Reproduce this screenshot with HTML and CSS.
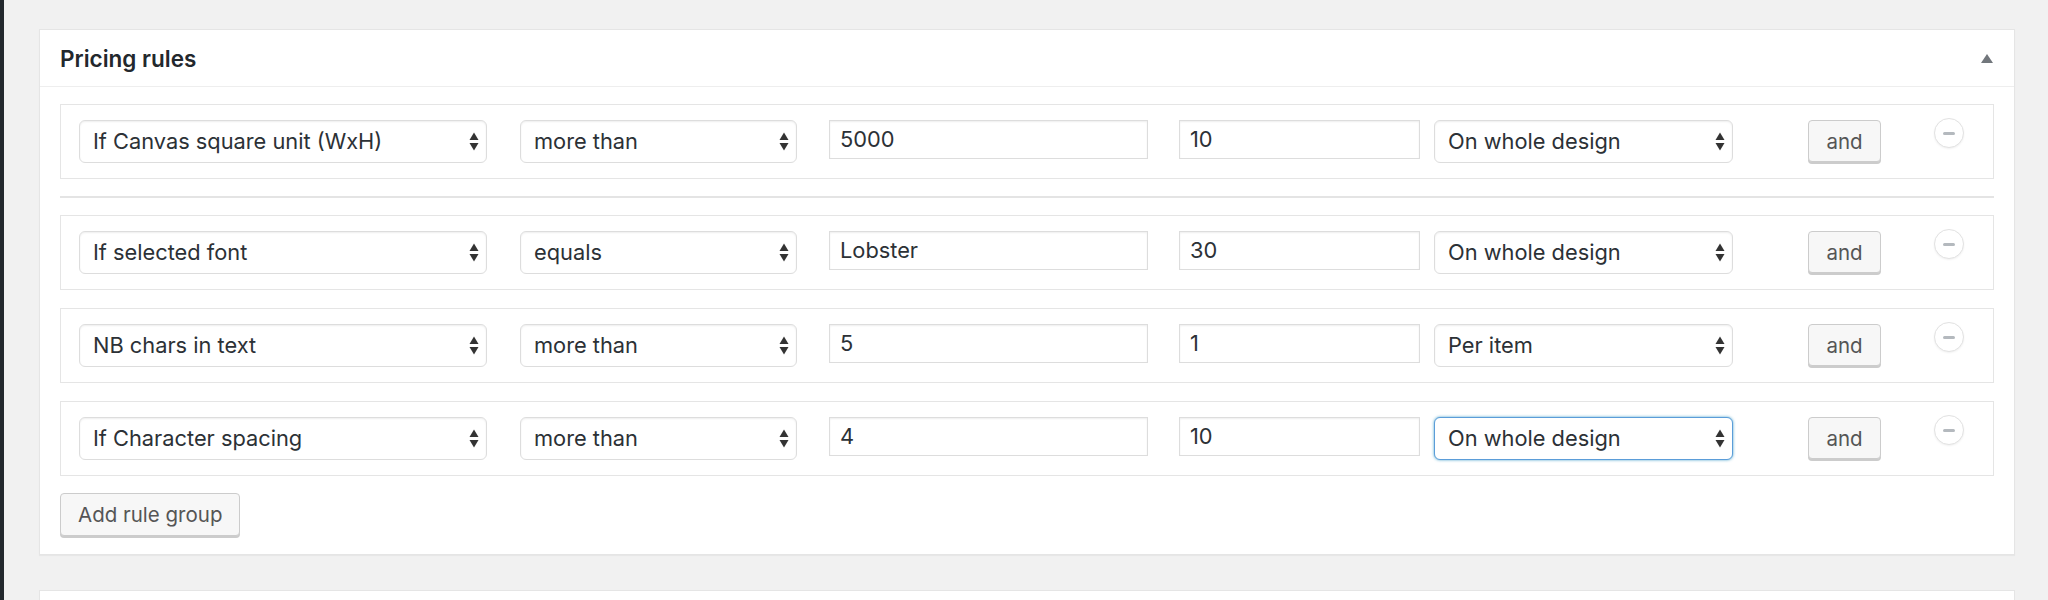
FILE: index.html
```html
<!DOCTYPE html>
<html>
<head>
    <link rel="stylesheet" href="styles.css">
</head>
<body>
    <div class="admin-menu"></div>
    <div class="wrap">
        <!-- Pricing rules box -->
        <div class="postbox">
            <div class="postbox-head">
                <h2>Pricing rules</h2>
                <svg class="toggle" width="12" height="9" viewBox="0 0 12 9"><polygon points="0,9 6,0 12,9" fill="#72777c"/></svg>
            </div>
            <div class="inside">
                <div class="rule-group">
                    <div class="select-wrap w-field">
                        <select><option>If Canvas square unit (WxH)</option></select>
                        <svg class="arrows" width="10" height="19" viewBox="0 0 10 19"><polygon points="0.5,8 5,0.5 9.5,8"/><polygon points="0.5,11 5,18.5 9.5,11"/></svg>
                    </div>
                    <div class="select-wrap w-op">
                        <select><option>more than</option></select>
                        <svg class="arrows" width="10" height="19" viewBox="0 0 10 19"><polygon points="0.5,8 5,0.5 9.5,8"/><polygon points="0.5,11 5,18.5 9.5,11"/></svg>
                    </div>
                    <input class="text-input w-value" type="text" value="5000">
                    <input class="text-input w-price" type="text" value="10">
                    <div class="select-wrap w-scope">
                        <select><option>On whole design</option></select>
                        <svg class="arrows" width="10" height="19" viewBox="0 0 10 19"><polygon points="0.5,8 5,0.5 9.5,8"/><polygon points="0.5,11 5,18.5 9.5,11"/></svg>
                    </div>
                    <button class="btn and-btn">and</button>
                    <span class="remove"><span></span></span>
                </div>

                <hr class="group-sep">

                <div class="rule-group">
                    <div class="select-wrap w-field">
                        <select><option>If selected font</option></select>
                        <svg class="arrows" width="10" height="19" viewBox="0 0 10 19"><polygon points="0.5,8 5,0.5 9.5,8"/><polygon points="0.5,11 5,18.5 9.5,11"/></svg>
                    </div>
                    <div class="select-wrap w-op">
                        <select><option>equals</option></select>
                        <svg class="arrows" width="10" height="19" viewBox="0 0 10 19"><polygon points="0.5,8 5,0.5 9.5,8"/><polygon points="0.5,11 5,18.5 9.5,11"/></svg>
                    </div>
                    <input class="text-input w-value" type="text" value="Lobster">
                    <input class="text-input w-price" type="text" value="30">
                    <div class="select-wrap w-scope">
                        <select><option>On whole design</option></select>
                        <svg class="arrows" width="10" height="19" viewBox="0 0 10 19"><polygon points="0.5,8 5,0.5 9.5,8"/><polygon points="0.5,11 5,18.5 9.5,11"/></svg>
                    </div>
                    <button class="btn and-btn">and</button>
                    <span class="remove"><span></span></span>
                </div>

                <div class="rule-group">
                    <div class="select-wrap w-field">
                        <select><option>NB chars in text</option></select>
                        <svg class="arrows" width="10" height="19" viewBox="0 0 10 19"><polygon points="0.5,8 5,0.5 9.5,8"/><polygon points="0.5,11 5,18.5 9.5,11"/></svg>
                    </div>
                    <div class="select-wrap w-op">
                        <select><option>more than</option></select>
                        <svg class="arrows" width="10" height="19" viewBox="0 0 10 19"><polygon points="0.5,8 5,0.5 9.5,8"/><polygon points="0.5,11 5,18.5 9.5,11"/></svg>
                    </div>
                    <input class="text-input w-value" type="text" value="5">
                    <input class="text-input w-price" type="text" value="1">
                    <div class="select-wrap w-scope">
                        <select><option>Per item</option></select>
                        <svg class="arrows" width="10" height="19" viewBox="0 0 10 19"><polygon points="0.5,8 5,0.5 9.5,8"/><polygon points="0.5,11 5,18.5 9.5,11"/></svg>
                    </div>
                    <button class="btn and-btn">and</button>
                    <span class="remove"><span></span></span>
                </div>

                <div class="rule-group">
                    <div class="select-wrap w-field">
                        <select><option>If Character spacing</option></select>
                        <svg class="arrows" width="10" height="19" viewBox="0 0 10 19"><polygon points="0.5,8 5,0.5 9.5,8"/><polygon points="0.5,11 5,18.5 9.5,11"/></svg>
                    </div>
                    <div class="select-wrap w-op">
                        <select><option>more than</option></select>
                        <svg class="arrows" width="10" height="19" viewBox="0 0 10 19"><polygon points="0.5,8 5,0.5 9.5,8"/><polygon points="0.5,11 5,18.5 9.5,11"/></svg>
                    </div>
                    <input class="text-input w-value" type="text" value="4">
                    <input class="text-input w-price" type="text" value="10">
                    <div class="select-wrap w-scope">
                        <select class="is-focus"><option>On whole design</option></select>
                        <svg class="arrows" width="10" height="19" viewBox="0 0 10 19"><polygon points="0.5,8 5,0.5 9.5,8"/><polygon points="0.5,11 5,18.5 9.5,11"/></svg>
                    </div>
                    <button class="btn and-btn">and</button>
                    <span class="remove"><span></span></span>
                </div>

                <button class="btn add-group">Add rule group</button>
            </div>
        </div>

        <div class="postbox next-box"></div>
    </div>
</body>
</html>
```

FILE: styles.css
```css
body {
    margin: 0;
    display: flex;
    height: 600px;
    overflow: hidden;
    background: #f1f1f1;
    font-family: Inter, "Noto Sans", sans-serif;
    color: #32373c;
}

.admin-menu {
    width: 4px;
    background: #23282d;
}

.wrap {
    flex: 1;
    padding: 29px 33px 0 35px;
}

.postbox {
    background: #fff;
    border: 1px solid #e5e5e5;
    box-shadow: 0 1px 1px rgba(0, 0, 0, .04);
    margin-bottom: 35px;
}

.postbox-head {
    height: 56px;
    border-bottom: 1px solid #eee;
    display: flex;
    align-items: center;
    justify-content: space-between;
    padding: 0 21px 0 20px;
}

.postbox-head h2 {
    margin: 0;
    font-size: 22.5px;
    font-weight: 600;
    color: #23282d;
}

.inside {
    padding: 17px 20px 18px;
    display: flex;
    flex-direction: column;
    align-items: flex-start;
}

.rule-group {
    box-sizing: border-box;
    width: 100%;
    height: 75px;
    border: 1px solid #e5e5e5;
    padding: 15px 18px;
    display: flex;
    align-items: flex-start;
    margin-bottom: 18px;
}

.rule-group:nth-last-of-type(1) {
    margin-bottom: 17px;
}

.group-sep {
    width: 100%;
    height: 2px;
    border: 0;
    background: #e4e4e4;
    margin: -1px 0 17px;
}

.select-wrap {
    position: relative;
    height: 43px;
}

.select-wrap select {
    appearance: none;
    -webkit-appearance: none;
    box-sizing: border-box;
    width: 100%;
    height: 43px;
    margin: 0;
    padding: 0 30px 1px 13px;
    border: 1px solid #ddd;
    border-radius: 6px;
    background: #fff;
    box-shadow: inset 0 1px 2px rgba(0, 0, 0, .07);
    font-family: Inter, "Noto Sans", sans-serif;
    font-size: 21.8px;
    color: #2c3136;
    outline: none;
}

.select-wrap select.is-focus {
    border-color: #5b9dd9;
    box-shadow: 0 0 3px rgba(30, 140, 190, .8);
}

.arrows {
    position: absolute;
    right: 8px;
    top: 12px;
    fill: #333;
}

.text-input {
    box-sizing: border-box;
    height: 39px;
    padding: 0 10px 1px;
    border: 1px solid #ddd;
    box-shadow: inset 0 1px 2px rgba(0, 0, 0, .07);
    font-family: Inter, "Noto Sans", sans-serif;
    font-size: 21.8px;
    color: #2c3136;
    outline: none;
}

.w-field { width: 408px; margin-right: 33px; }
.w-op { width: 277px; margin-right: 32px; }
.w-value { width: 319px; margin: 0 31px 0 0; }
.w-price { width: 241px; margin: 0 14px 0 0; }
.w-scope { width: 299px; margin-right: 75px; }

.btn {
    box-sizing: border-box;
    background: #f7f7f7;
    border: 1px solid #ccc;
    border-radius: 4px;
    box-shadow: 0 2px 0 #ccc;
    color: #555;
    font-family: Inter, "Noto Sans", sans-serif;
    font-size: 20.5px;
    cursor: pointer;
}

.and-btn {
    width: 73px;
    height: 42px;
    padding: 0;
    margin-right: 53px;
}

.add-group {
    height: 43px;
    padding: 0 17px;
}

.remove {
    box-sizing: border-box;
    width: 30px;
    height: 30px;
    margin-top: -2px;
    border: 1px solid #e2e2e2;
    border-radius: 50%;
    background: #fff;
    box-shadow: 0 1px 2px rgba(0, 0, 0, .06);
    display: flex;
    align-items: center;
    justify-content: center;
}

.remove span {
    width: 12px;
    height: 3px;
    border-radius: 2px;
    background: #b4b9be;
}

.next-box {
    height: 9px;
    border-bottom: 0;
    box-shadow: none;
    margin-bottom: 0;
}
```
